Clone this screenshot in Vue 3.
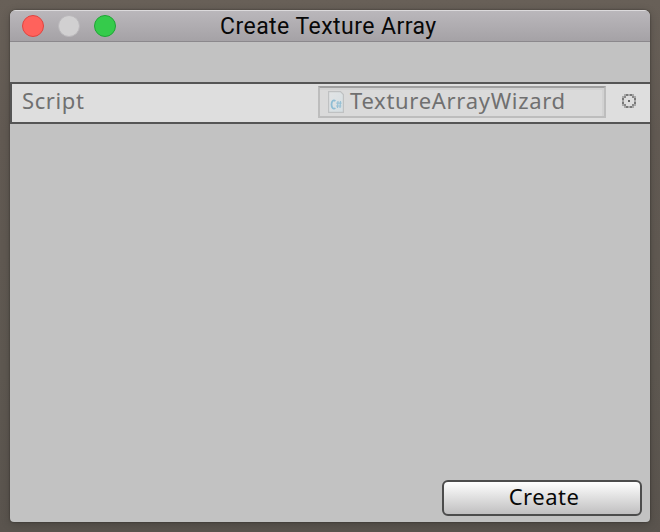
<script setup>
const lights = ['close', 'minimize', 'zoom']
</script>

<template>
  <div class="desktop">
    <div class="window">
      <header class="titlebar">
        <div class="lights">
          <span v-for="l in lights" :key="l" class="light" :class="l"></span>
        </div>
        <h1 class="title">Create Texture Array</h1>
      </header>
      <main class="content">
        <div class="row">
          <label class="label">Script</label>
          <div class="field">
            <svg class="file" width="16" height="22" viewBox="0 0 16 22">
              <defs>
                <linearGradient id="paper" x1="0" y1="0" x2="1" y2="1">
                  <stop offset="0" stop-color="#e2e4e5" />
                  <stop offset="1" stop-color="#d5dee2" />
                </linearGradient>
              </defs>
              <path d="M.6.6H12.5L15.4 3.5V21.4H.6Z" fill="url(#paper)" stroke="#bfc1c2" stroke-width="1.2" />
              <path d="M7.4 10C5.4 8.4 3.5 10.2 3.5 13.5S5.4 18.6 7.4 17.1" fill="none" stroke="#8fbdd4" stroke-width="1.8" />
              <path d="M10 10L9.5 17M12.5 10L12 17M8.3 12.2H13.6M8 15H13.3" fill="none" stroke="#98c1d5" stroke-width="1.2" />
            </svg>
            <span class="value">TextureArrayWizard</span>
          </div>
          <svg class="picker" width="16" height="16" viewBox="0 0 16 16" shape-rendering="crispEdges">
            <path d="M3 1H13V3H3ZM3 13H13V15H3ZM1 3H3V13H1ZM13 3H15V13H13Z" fill="#a8a8a8" />
            <path d="M3 3H5V5H3ZM11 3H13V5H11ZM3 11H5V13H3ZM11 11H13V13H11Z" fill="#898989" />
            <path d="M5 1H7V3H5ZM9 1H11V3H9ZM5 13H7V15H5ZM9 13H11V15H9ZM1 5H3V7H1ZM1 9H3V11H1ZM13 5H15V7H13ZM13 9H15V11H13Z" fill="#777" />
            <rect x="7" y="7" width="2" height="2" fill="#686868" />
          </svg>
        </div>
        <footer class="footer">
          <button class="create"><span class="caption">Create</span></button>
        </footer>
      </main>
    </div>
  </div>
</template>

<style>
body { margin: 0; overflow: hidden; }
</style>

<style scoped>
.desktop {
  box-sizing: border-box;
  width: 660px;
  height: 532px;
  padding: 10px;
  background: linear-gradient(#686058, #625a53 25%, #5e5851 70%, #5a544e);
}
.window {
  display: flex;
  flex-direction: column;
  width: 640px;
  height: 512px;
  border-radius: 6px 6px 4px 4px;
  overflow: hidden;
  background: #c2c2c2;
  box-shadow: 0 0 2px rgba(0, 0, 0, .45), 0 2px 10px rgba(0, 0, 0, .2);
}
.titlebar {
  box-sizing: border-box;
  flex: none;
  display: grid;
  grid-template-columns: 210px 216px 1fr;
  align-items: center;
  height: 32px;
  border-top: 1px solid #dcdadc;
  border-bottom: 1px solid #8b888c;
  background: linear-gradient(#bab7bb, #a5a2a6);
}
.lights { display: flex; gap: 14px; padding-left: 12px; }
.light {
  box-sizing: border-box;
  width: 22px;
  height: 22px;
  border: 1px solid;
  border-radius: 50%;
}
.close { background: #ff625c; border-color: #e0443f; }
.minimize { background: #d1d0d1; border-color: #bab8bb; }
.zoom { background: #35cb4b; border-color: #1ea535; }
.title {
  margin: 0;
  padding-top: 1px;
  white-space: nowrap;
  color: #080808;
  font: 400 23px/29px Roboto, sans-serif;
  letter-spacing: .46px;
}
.content {
  flex: 1;
  display: flex;
  flex-direction: column;
  padding-top: 40px;
  font-family: "Noto Sans", sans-serif;
}
.row {
  box-sizing: border-box;
  display: flex;
  align-items: flex-start;
  height: 42px;
  padding: 2px 13px 0 10px;
  border: 2px solid #555;
  border-right: 0;
  background: #dedede;
  color: #707070;
  font-size: 22px;
  line-height: 28px;
}
.label { width: 296px; letter-spacing: .6px; }
.field {
  box-sizing: border-box;
  display: flex;
  align-items: flex-start;
  width: 288px;
  height: 32px;
  padding-left: 8px;
  border: 2px solid #bdbdbd;
  border-top-color: #a0a0a0;
  background: #dadada;
  box-shadow: inset 0 2px #d2d2d2, inset -2px 0 #d2d2d2;
}
.file { flex: none; margin-top: 3px; }
.value { margin: -2px 0 0 6px; white-space: nowrap; letter-spacing: .7px; }
.picker { margin: 7px 0 0 15px; }
.footer {
  display: flex;
  justify-content: flex-end;
  margin-top: auto;
  padding: 0 8px 6px 0;
}
.create {
  box-sizing: border-box;
  width: 200px;
  height: 36px;
  padding: 0 0 4px 4px;
  border: 2px solid #4c4c4c;
  border-radius: 6px;
  background: linear-gradient(#fff, #e5e5e5 40%, #c0bfc0);
  color: #080808;
  font: 22px/28px "Noto Sans", sans-serif;
  letter-spacing: .5px;
}
</style>
